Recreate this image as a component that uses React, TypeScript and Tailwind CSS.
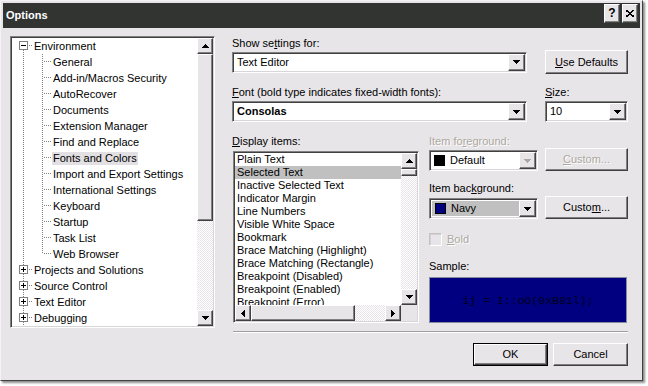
import React from "react";

const sunken =
  "border border-t-[#808080] border-l-[#808080] border-r-white border-b-white shadow-[inset_1px_1px_0_#404040,inset_-1px_-1px_0_#d8d5d8]";
const raised =
  "border border-t-white border-l-white border-r-[#404040] border-b-[#404040] shadow-[inset_-1px_-1px_0_#808080] bg-[#e8e5e8]";
const disabledText = "text-[#aca8a0] [text-shadow:1px_1px_0_#fff]";
const checker =
  "bg-[repeating-conic-gradient(#ffffff_0_25%,#e8e5e8_0_50%)] bg-[length:2px_2px]";

type Dir = "up" | "down" | "left" | "right";

// pixel triangle, 7x4 (or 4x7)
function Tri({ dir, color = "#000" }: { dir: Dir; color?: string }) {
  const rows = [
    [0, 7],
    [1, 5],
    [2, 3],
    [3, 1],
  ];
  const vertical = dir === "up" || dir === "down";
  return (
    <svg width={vertical ? 7 : 4} height={vertical ? 4 : 7} shapeRendering="crispEdges">
      {rows.map(([o, len], i) => {
        if (dir === "down") return <rect key={i} x={o} y={i} width={len} height={1} fill={color} />;
        if (dir === "up") return <rect key={i} x={o} y={3 - i} width={len} height={1} fill={color} />;
        if (dir === "right") return <rect key={i} x={i} y={o} width={1} height={len} fill={color} />;
        return <rect key={i} x={3 - i} y={o} width={1} height={len} fill={color} />;
      })}
    </svg>
  );
}

function ArrowBtn({ dir, className = "", disabled }: { dir: Dir; className?: string; disabled?: boolean }) {
  return (
    <div className={`${raised} ${className} flex items-center justify-center shrink-0`}>
      <Tri dir={dir} color={disabled ? "#aca8a0" : "#000"} />
    </div>
  );
}

function Combo({
  className,
  inner = "bg-white",
  disabled,
  children,
}: {
  className: string;
  inner?: string;
  disabled?: boolean;
  children: React.ReactNode;
}) {
  return (
    <div className={`${className} ${sunken} bg-white p-[1px] flex`}>
      <div className={`flex-1 flex items-center pl-[3px] whitespace-nowrap ${inner}`}>{children}</div>
      <ArrowBtn dir="down" disabled={disabled} className="w-[17px]" />
    </div>
  );
}

function Btn({ className, children }: { className: string; children: React.ReactNode }) {
  return <div className={`${raised} ${className} flex items-center justify-center`}>{children}</div>;
}

type Node = { t: string; lvl: 0 | 1; box?: "minus" | "plus"; last?: boolean; sel?: boolean };

const tree: Node[] = [
  { t: "Environment", lvl: 0, box: "minus" },
  { t: "General", lvl: 1 },
  { t: "Add-in/Macros Security", lvl: 1 },
  { t: "AutoRecover", lvl: 1 },
  { t: "Documents", lvl: 1 },
  { t: "Extension Manager", lvl: 1 },
  { t: "Find and Replace", lvl: 1 },
  { t: "Fonts and Colors", lvl: 1, sel: true },
  { t: "Import and Export Settings", lvl: 1 },
  { t: "International Settings", lvl: 1 },
  { t: "Keyboard", lvl: 1 },
  { t: "Startup", lvl: 1 },
  { t: "Task List", lvl: 1 },
  { t: "Web Browser", lvl: 1, last: true },
  { t: "Projects and Solutions", lvl: 0, box: "plus" },
  { t: "Source Control", lvl: 0, box: "plus" },
  { t: "Text Editor", lvl: 0, box: "plus" },
  { t: "Debugging", lvl: 0, box: "plus" },
  { t: "Device Tools", lvl: 0, box: "plus" },
];

function Connector({ n, first }: { n: Node; first: boolean }) {
  const dot = { stroke: "#808080", strokeDasharray: "1 1" };
  if (n.lvl === 0) {
    return (
      <svg width={21} height={16} shapeRendering="crispEdges" className="shrink-0">
        {!first && <line x1={11.5} y1={0} x2={11.5} y2={3} {...dot} />}
        <line x1={11.5} y1={12} x2={11.5} y2={16} {...dot} />
        <line x1={17} y1={7.5} x2={21} y2={7.5} {...dot} />
        <rect x={7.5} y={3.5} width={8} height={8} fill="#fff" stroke="#808080" />
        <line x1={9} y1={7.5} x2={14} y2={7.5} stroke="#000" />
        {n.box === "plus" && <line x1={11.5} y1={5} x2={11.5} y2={10} stroke="#000" />}
      </svg>
    );
  }
  return (
    <svg width={40} height={16} shapeRendering="crispEdges" className="shrink-0">
      <line x1={11.5} y1={0} x2={11.5} y2={16} {...dot} />
      <line x1={30.5} y1={0} x2={30.5} y2={n.last ? 8 : 16} {...dot} />
      <line x1={32} y1={7.5} x2={40} y2={7.5} {...dot} />
    </svg>
  );
}

function Tree() {
  return (
    <div className={`ml-[7px] mt-[8px] w-[205px] h-[292px] ${sunken} bg-white p-[1px] flex shrink-0`}>
      <div className="flex-1 overflow-hidden">
        {tree.map((n, i) => (
          <div key={n.t} className="h-[16px] flex items-center">
            <Connector n={n} first={i === 0} />
            <span className={`px-[1px] leading-[13px] whitespace-nowrap ${n.sel ? "bg-[#e2e0e3]" : ""}`}>{n.t}</span>
          </div>
        ))}
      </div>
      <div className="w-[16px] flex flex-col">
        <ArrowBtn dir="up" className="h-[16px]" />
        <div className={`h-[167px] ${raised}`} />
        <div className={`flex-1 ${checker}`} />
        <ArrowBtn dir="down" className="h-[16px]" />
      </div>
    </div>
  );
}

const items = [
  "Plain Text",
  "Selected Text",
  "Inactive Selected Text",
  "Indicator Margin",
  "Line Numbers",
  "Visible White Space",
  "Bookmark",
  "Brace Matching (Highlight)",
  "Brace Matching (Rectangle)",
  "Breakpoint (Disabled)",
  "Breakpoint (Enabled)",
  "Breakpoint (Error)",
];

function DisplayList() {
  return (
    <div className={`ml-[1px] mt-[3px] w-[186px] h-[172px] ${sunken} bg-white p-[1px] flex flex-col`}>
      <div className="flex flex-1 min-h-0">
        <div className="flex-1 overflow-hidden">
          {items.map((t, i) => (
            <div
              key={t}
              className={`h-[13px] leading-[13px] pl-[2px] whitespace-nowrap ${i === 1 ? "bg-[#c0c0c0]" : ""}`}
            >
              {t}
            </div>
          ))}
        </div>
        <div className="w-[16px] flex flex-col">
          <ArrowBtn dir="up" className="h-[16px]" />
          <div className={`h-[7px] ${raised}`} />
          <div className={`flex-1 ${checker}`} />
          <ArrowBtn dir="down" className="h-[16px]" />
        </div>
      </div>
      <div className="flex h-[16px]">
        <ArrowBtn dir="left" className="w-[16px]" />
        <div className={`w-[104px] ${raised}`} />
        <div className={`flex-1 ${checker}`} />
        <ArrowBtn dir="right" className="w-[16px]" />
        <div className="w-[16px] bg-[#e8e5e8]" />
      </div>
    </div>
  );
}

function RightPane() {
  return (
    <div className="ml-[17px] mt-[8px] w-[396px] flex flex-col">
      <div className="mt-[1px] h-[13px]">
        Show se<span className="underline">t</span>tings for:
      </div>
      <div className="flex items-center justify-between h-[24px]">
        <Combo className="w-[295px] h-[21px]">Text Editor</Combo>
        <Btn className="w-[83px] h-[24px]">
          <span>
            <span className="underline">U</span>se Defaults
          </span>
        </Btn>
      </div>

      <div className="mt-[12px] h-[13px] flex justify-between">
        <span>
          <span className="underline">F</span>ont (bold type indicates fixed-width fonts):
        </span>
        <span className="w-[83px]">
          <span className="underline">S</span>ize:
        </span>
      </div>
      <div className="mt-[2px] flex justify-between">
        <Combo className="w-[295px] h-[21px]">
          <span className="font-bold">Consolas</span>
        </Combo>
        <Combo className="w-[83px] h-[21px]">10</Combo>
      </div>

      <div className="mt-[13px] flex">
        <div className="w-[197px] flex flex-col">
          <div className="h-[13px]">
            <span className="underline">D</span>isplay items:
          </div>
          <DisplayList />
        </div>

        <div className="w-[199px] flex flex-col">
          <div className={`h-[13px] ${disabledText}`}>
            Item fo<span className="underline">r</span>eground:
          </div>
          <div className="flex items-end justify-between h-[23px]">
            <Combo className="w-[109px] h-[21px]" disabled>
              <span className="w-[11px] h-[11px] bg-black mr-[5px] shrink-0" />
              Default
            </Combo>
            <Btn className={`w-[83px] h-[23px] ${disabledText}`}>
              <span>
                <span className="underline">C</span>ustom...
              </span>
            </Btn>
          </div>

          <div className="mt-[11px] h-[13px]">
            Item bac<span className="underline">k</span>ground:
          </div>
          <div className="mt-[1px] flex items-end justify-between h-[23px]">
            <Combo className="w-[109px] h-[21px]" inner="bg-[#c0c0c0] ml-[1px] my-[1px]">
              <span className="w-[11px] h-[11px] bg-[#000080] border border-black mr-[5px] shrink-0" />
              Navy
            </Combo>
            <Btn className="w-[83px] h-[23px]">
              <span>
                Custo<span className="underline">m</span>...
              </span>
            </Btn>
          </div>

          <div className="mt-[14px] h-[13px] flex items-center">
            <span className="w-[13px] h-[13px] border border-t-[#c4c0c4] border-l-[#c4c0c4] border-r-white border-b-white shadow-[inset_1px_1px_0_#d4d0d4] bg-[#e8e5e8]" />
            <span className={`ml-[5px] ${disabledText}`}>
              <span className="underline">B</span>old
            </span>
          </div>

          <div className="mt-[14px] h-[13px]">Sample:</div>
          <div className="mt-[4px] w-[198px] h-[46px] bg-[#000080] border border-[#8a8a9a] flex items-center justify-center">
            <span className="font-['Liberation_Mono',monospace] text-[11.5px] text-[#000018]">ij = I::oO(0xB81l);</span>
          </div>
        </div>
      </div>

      <div className="mt-[8px] ml-[1px] h-[2px] border-t border-t-[#a0a0a0] border-b border-b-white" />
      <div className="mt-[10px] flex justify-end gap-[5px]">
        <div className="w-[75px] h-[23px] border border-black">
          <Btn className="w-full h-full">OK</Btn>
        </div>
        <Btn className="w-[75px] h-[23px]">Cancel</Btn>
      </div>
    </div>
  );
}

function TitleBar() {
  return (
    <div className="h-[25px] bg-[#323432] flex items-center justify-between pl-[3px] pr-[2px] shrink-0">
      <span className="text-white font-bold text-[11px]">Options</span>
      <div className="self-start mt-[1px] flex gap-[2px]">
        <div className={`${raised} w-[16px] h-[19px] flex items-center justify-center font-bold text-[12px]`}>?</div>
        <div className={`${raised} w-[16px] h-[19px] flex items-center justify-center`}>
          <svg width={8} height={7} shapeRendering="crispEdges">
            <path d="M0 0L8 7M8 0L0 7" stroke="#000" strokeWidth={1.6} />
          </svg>
        </div>
      </div>
    </div>
  );
}

export default function App() {
  return (
    <div className="w-[648px] h-[386px] bg-white font-['Liberation_Sans',Arial,sans-serif] text-[11px] leading-[13px] text-black overflow-hidden">
      <div className="w-[643px] h-[381px] bg-[#e8e5e8] border border-t-[#f4f2f4] border-l-[#f4f2f4] border-r-[#404040] border-b-[#404040] shadow-[2px_2px_2px_rgba(0,0,0,0.45)] p-[2px] flex flex-col">
        <TitleBar />
        <div className="flex items-start">
          <Tree />
          <RightPane />
        </div>
      </div>
    </div>
  );
}
